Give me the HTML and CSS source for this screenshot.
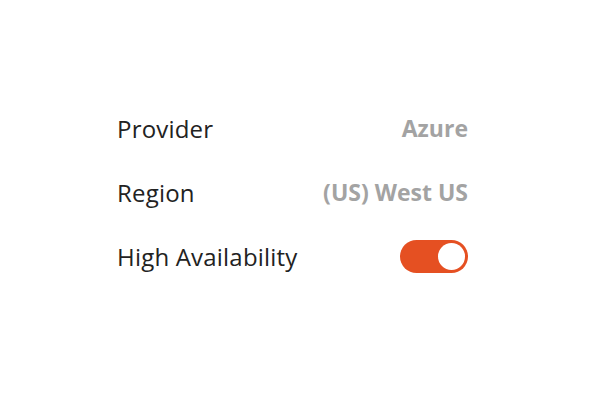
FILE: index.html
```html
<!DOCTYPE html>
<html>
<head>
<meta charset="utf-8">
<link rel="stylesheet" href="styles.css">
</head>
<body>
<div class="settings">
  <div class="row"><span class="label">Provider</span><span class="value">Azure</span></div>
  <div class="row"><span class="label">Region</span><span class="value">(US) West US</span></div>
  <div class="row"><span class="label">High Availability</span><span class="toggle"><span class="knob"></span></span></div>
</div>
</body>
</html>
```
FILE: styles.css
```css
html, body { margin: 0; padding: 0; background: #fff; }
body { width: 600px; height: 400px; }
.settings {
  display: flex;
  flex-direction: column;
  gap: 30px;
  width: 351px;
  margin-left: 117px;
  padding-top: 111px;
  font-family: "Open Sans", sans-serif;
  font-size: 24px;
}
.row {
  display: flex;
  justify-content: space-between;
  align-items: center;
  height: 34px;
}
.label { color: #222; letter-spacing: 0.2px; }
.value { color: #a3a3a3; font-weight: 700; font-size: 23px; }
.toggle {
  width: 68px; height: 33px;
  border-radius: 17px;
  background: #e55022;
  display: flex;
  align-items: center;
  justify-content: flex-end;
  padding-right: 3px;
  box-sizing: border-box;
}
.knob { width: 27px; height: 27px; border-radius: 50%; background: #fff; }
```
